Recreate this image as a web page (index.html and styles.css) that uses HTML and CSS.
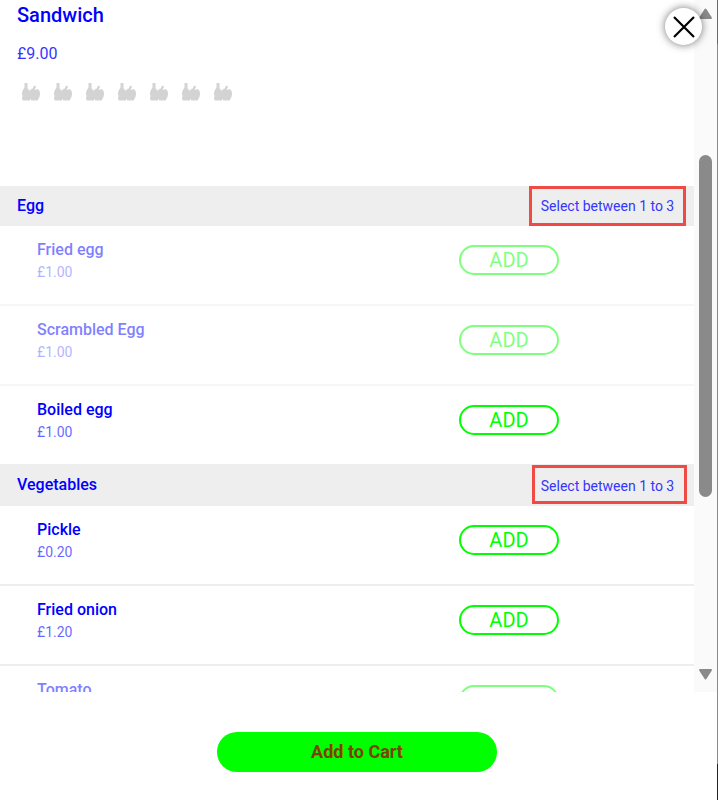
FILE: index.html
```html
<!DOCTYPE html>
<html lang="en">
<head>
  <meta charset="UTF-8">
  <title>Sandwich</title>
  <link rel="stylesheet" href="styles.css">
</head>
<body>
  <svg class="defs" width="0" height="0">
    <symbol id="allergen" viewBox="0 0 18 18">
      <path d="M2.500 0h3v5l1 1.500 1.500 3V17.500H1l-1-1.500v-2l1-1-1-1V9l1.500-3 1-1.500z"/>
      <path d="M10 6.500l2.200-4 2 1-2.200 4z"/>
      <path d="M6.700 11q0-4.500 3.300-5 1.500 0 3 .7 1.500-.7 2.500-.5 2.500.6 2.500 4.800 0 3.500-2.500 6.500h-6q-2.800-2.500-2.800-6.500z"/>
    </symbol>
  </svg>
  <div class="modal">
    <button class="close" aria-label="Close">
      <svg width="24" height="24" viewBox="0 0 24 24"><path d="M2 2l20 20M22 2L2 22"/></svg>
    </button>
    <div class="scroll-area">
      <div class="content">
        <section class="product">
          <h1>Sandwich</h1>
          <p class="product-price">£9.00</p>
          <div class="allergens">
            <svg><use href="#allergen"/></svg>
            <svg><use href="#allergen"/></svg>
            <svg><use href="#allergen"/></svg>
            <svg><use href="#allergen"/></svg>
            <svg><use href="#allergen"/></svg>
            <svg><use href="#allergen"/></svg>
            <svg><use href="#allergen"/></svg>
          </div>
        </section>

        <div class="group-head">
          <span class="group-name">Egg</span>
          <span class="group-rule rule-egg">Select between 1 to 3</span>
        </div>
        <div class="row faded">
          <div><div class="item-name">Fried egg</div><div class="item-price">£1.00</div></div>
          <button class="add">ADD</button>
        </div>
        <div class="row faded">
          <div><div class="item-name">Scrambled Egg</div><div class="item-price">£1.00</div></div>
          <button class="add">ADD</button>
        </div>
        <div class="row">
          <div><div class="item-name">Boiled egg</div><div class="item-price">£1.00</div></div>
          <button class="add">ADD</button>
        </div>

        <div class="group-head">
          <span class="group-name veg-name">Vegetables</span>
          <span class="group-rule rule-veg">Select between 1 to 3</span>
        </div>
        <div class="row">
          <div><div class="item-name">Pickle</div><div class="item-price">£0.20</div></div>
          <button class="add">ADD</button>
        </div>
        <div class="row">
          <div><div class="item-name">Fried onion</div><div class="item-price">£1.20</div></div>
          <button class="add">ADD</button>
        </div>
        <div class="row faded">
          <div><div class="item-name">Tomato</div><div class="item-price">£0.50</div></div>
          <button class="add">ADD</button>
        </div>
      </div>
      <div class="scrollbar">
        <svg class="arrow-up" width="15" height="11" viewBox="0 0 15 11"><path d="M7.500 1.500l5.500 8.500H2z"/></svg>
        <div class="thumb"></div>
        <svg class="arrow-down" width="15" height="11" viewBox="0 0 15 11"><path d="M2 1h11l-5.500 8.500z"/></svg>
      </div>
    </div>
    <div class="footer">
      <button class="cart">Add to Cart</button>
    </div>
  </div>
</body>
</html>
```

FILE: styles.css
```css
* {
  box-sizing: border-box;
}

body {
  margin: 0;
  font-family: Roboto, sans-serif;
  background-color: #fff;
  color: #00f;
}

button {
  font-family: inherit;
  cursor: pointer;
}

.defs {
  position: absolute;
}

.modal {
  position: relative;
  width: 718px;
  height: 800px;
  overflow: hidden;
  border-right: 1px solid;
  border-image: linear-gradient(to bottom, #8a5a5a 0, #8a5a5a 45px, #8a8a8a 45px, #8a8a8a 763px, #4a0a4a 763px, #4a0a4a 800px) 1;
}

.close {
  position: absolute;
  top: 8px;
  left: 665px;
  width: 37px;
  height: 37px;
  padding: 0;
  display: flex;
  align-items: center;
  justify-content: center;
  border: 0;
  border-radius: 50%;
  background-color: #fff;
  box-shadow: 0 0 8px rgba(0, 0, 0, 0.55);
}

.close path {
  stroke: #000;
  stroke-width: 2.2;
  fill: none;
}

.scroll-area {
  display: flex;
  height: 692px;
}

.content {
  width: 694px;
  overflow: hidden;
}

.product {
  height: 186px;
  padding: 4px 17px 0;
}

h1 {
  margin: 0;
  font-size: 20px;
  line-height: 23px;
  font-weight: 500;
}

.product-price {
  margin: 17px 0 0;
  font-size: 16px;
  line-height: 19px;
  opacity: 0.8;
}

.allergens {
  display: flex;
  gap: 14px;
  margin: 20px 0 0 5px;
}

.allergens svg {
  width: 18px;
  height: 18px;
  fill: #d3d3d3;
}

.group-head {
  display: flex;
  justify-content: space-between;
  align-items: center;
  height: 40px;
  background-color: #eee;
  padding-left: 17px;
}

.group-name {
  width: 82px;
  overflow: hidden;
  white-space: nowrap;
  padding-bottom: 2px;
  font-size: 16px;
  font-weight: 500;
}

.veg-name {
  padding-bottom: 4px;
}

.group-rule {
  display: flex;
  align-items: center;
  justify-content: center;
  height: 40px;
  border: 3px solid #ef4a43;
  font-size: 14px;
  color: #3535ff;
}

.rule-egg {
  width: 157px;
  margin-right: 8px;
}

.rule-veg {
  width: 155px;
  height: 39px;
  margin-top: -1px;
  margin-right: 7px;
  padding-top: 3px;
  padding-right: 4px;
  align-self: flex-start;
}

.row {
  display: flex;
  justify-content: space-between;
  height: 80px;
  padding: 14px 135px 0 37px;
  border-bottom: 2px solid #eee;
}

.row.faded {
  opacity: 0.5;
}

.item-name {
  font-size: 16px;
  line-height: 20px;
  font-weight: 480;
}

.item-price {
  margin-top: 4px;
  font-size: 14px;
  line-height: 16px;
  opacity: 0.6;
}

.add {
  width: 100px;
  height: 30px;
  margin-top: 5px;
  padding: 0;
  border: 2px solid #0f0;
  border-radius: 15px;
  background-color: #fff;
  color: #0f0;
  font-size: 20px;
  font-weight: 450;
  line-height: 26px;
}

.scrollbar {
  display: flex;
  flex-direction: column;
  align-items: center;
  width: 23px;
  background-color: #fafafa;
}

.arrow-up {
  margin-top: 8px;
  fill: #8a8a8a;
  stroke: #8a8a8a;
  stroke-width: 2;
  stroke-linejoin: round;
}

.thumb {
  width: 13px;
  height: 342px;
  margin-top: 136px;
  border-radius: 7px;
  background-color: #8a8a8a;
}

.arrow-down {
  margin-top: 172px;
  fill: #8a8a8a;
  stroke: #8a8a8a;
  stroke-width: 2;
  stroke-linejoin: round;
}

.footer {
  display: flex;
  justify-content: center;
  padding-top: 40px;
}

.cart {
  width: 280px;
  height: 40px;
  margin-left: -3px;
  padding: 0 0 2px;
  border: 0;
  border-radius: 20px;
  background-color: #0f0;
  color: #7f3f00;
  font-size: 18px;
  font-weight: 700;
}
```
